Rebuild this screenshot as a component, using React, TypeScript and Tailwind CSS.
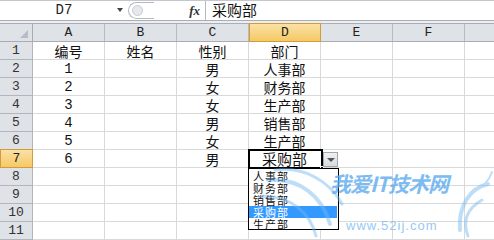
const cols = ['A', 'B', 'C', 'D', 'E', 'F'];

const rows: string[][] = [
    ['编号', '姓名', '性别', '部门'],
    ['1', '', '男', '人事部'],
    ['2', '', '女', '财务部'],
    ['3', '', '女', '生产部'],
    ['4', '', '男', '销售部'],
    ['5', '', '女', '生产部'],
    ['6', '', '男', ''],
    [], [], [], [],
];

const options = ['人事部', '财务部', '销售部', '采购部', '生产部'];

const cjk = { fontFamily: '"Noto Sans CJK SC", "Liberation Sans", sans-serif' };
const mono = { fontFamily: '"Liberation Mono", "DejaVu Sans Mono", monospace' };

const App = () => {
    return (
        <div className="relative w-[494px] h-[240px] overflow-hidden bg-white select-none">
            {/* Formula bar */}
            <div className="flex h-[20px] border-t border-[#c4c8ce] bg-white">
                <div className="relative w-[128px] flex items-center justify-center text-[14px] text-[#222]" style={mono}>
                    D7
                    <span className="absolute right-[5px] top-[7px] w-0 h-0 border-l-[3px] border-r-[3px] border-t-[4px] border-l-transparent border-r-transparent border-t-[#444]" />
                </div>
                <div className="flex items-center w-[28px]">
                    <div className="flex items-center h-[17px] w-[26px] rounded-l-full border border-r-0 border-[#b5b9bf] pl-[3px]">
                        <div className="w-[11px] h-[11px] rounded-full bg-[#e6e8eb] border border-[#c9ccd0]" />
                    </div>
                </div>
                <div className="flex-1 max-w-[49px] flex items-center justify-end pr-[5px]">
                    <span className="text-[13px] italic font-bold text-[#333]" style={{ fontFamily: '"Liberation Serif", serif' }}>fx</span>
                </div>
                <div className="flex-1 flex items-center border-l border-[#b5b9bf] pl-[6px] text-[15px] text-[#111]" style={cjk}>
                    采购部
                </div>
            </div>
            <div className="h-[4px] border-t border-b border-[#a9aeb5] bg-[#eceef1]" />

            {/* Column headers */}
            <div className="flex h-[18px] bg-[#dfe2e7] border-b border-[#a8adb4]">
                <div className="relative w-[33px] border-r border-[#a8adb4]">
                    <span className="absolute right-[4px] bottom-[3px] w-0 h-0" style={{ borderRight: '8px solid #b9bdc3', borderTop: '8px solid transparent' }} />
                </div>
                {cols.map((c) => (
                    <div
                        key={c}
                        className={
                            c === 'D'
                                ? 'w-[72px] flex items-center justify-center text-[13px] text-[#222] bg-gradient-to-b from-[#fbe1a4] to-[#f5c964] border border-[#d49b3a] -mt-px -mb-px'
                                : 'w-[72px] flex items-center justify-center text-[13px] text-[#222] border-r border-[#b8bcc2]'
                        }
                        style={mono}
                    >
                        {c}
                    </div>
                ))}
                <div className="flex-1" />
            </div>

            {/* Rows */}
            {rows.map((r, i) => (
                <div key={i} className="flex h-[18px]">
                    <div
                        className={
                            i === 6
                                ? 'w-[33px] flex items-center justify-center text-[13px] text-[#222] bg-gradient-to-b from-[#fbe1a4] to-[#f5c964] border border-[#d49b3a] -mt-px'
                                : 'w-[33px] flex items-center justify-center text-[13px] text-[#333] bg-[#dfe2e7] border-r border-b border-[#b1b6bd]'
                        }
                        style={mono}
                    >
                        {i + 1}
                    </div>
                    {cols.map((c, j) => {
                        const v = r[j] ?? '';
                        const isNum = /^[0-9]+$/.test(v);
                        return (
                            <div
                                key={c}
                                className="w-[72px] flex items-center justify-center border-r border-b border-[#d9d9d9] text-[14px] text-[#111] leading-none"
                                style={isNum ? mono : cjk}
                            >
                                {v}
                            </div>
                        );
                    })}
                    <div className="flex-1 border-b border-[#d9d9d9]" />
                </div>
            ))}

            {/* Active cell D7 */}
            <div className="absolute left-[248px] top-[149px] w-[75px] h-[20px] border-2 border-black bg-white flex items-center justify-center text-[15px] text-[#111]" style={cjk}>
                <span className="-ml-[2px]">采购部</span>
                <span className="absolute right-[-3px] bottom-[-3px] w-[4px] h-[4px] bg-black border border-white" />
            </div>

            {/* Dropdown button */}
            <div className="absolute left-[323px] top-[152px] w-[15px] h-[15px] border border-[#a3a7ad] bg-gradient-to-b from-[#eef0f2] to-[#d9dcdf] flex items-center justify-center">
                <span className="w-0 h-0 border-l-[4px] border-r-[4px] border-t-[4px] border-l-transparent border-r-transparent border-t-[#555]" />
            </div>

            {/* Dropdown list */}
            <div className="absolute left-[248px] top-[168px] w-[91px] h-[62px] border border-black bg-white pt-[1px]" style={cjk}>
                {options.map((o) => (
                    <div
                        key={o}
                        className={
                            o === '采购部'
                                ? 'h-[12px] w-[88px] bg-[#3399ff] text-white text-[11px] leading-[12px] pl-[4px] tracking-[1px]'
                                : 'h-[12px] text-[#111] text-[11px] leading-[12px] pl-[4px] tracking-[1px]'
                        }
                    >
                        {o}
                    </div>
                ))}
            </div>

            {/* Watermark */}
            <div className="absolute inset-0 pointer-events-none">
                <svg className="absolute left-0 top-0" width="494" height="240" viewBox="0 0 494 240">
                    <g fill="none" stroke="#6fb8f2" strokeLinecap="round" opacity="0.45">
                        <path d="M268 180 C 300 178, 322 196, 330 224" strokeWidth="4" />
                        <path d="M262 196 C 290 196, 310 212, 316 236" strokeWidth="3" />
                        <path d="M275 170 C 305 166, 330 182, 342 204" strokeWidth="3" />
                        <path d="M488 184 C 470 188, 458 206, 460 230" strokeWidth="4" />
                        <path d="M482 200 C 468 208, 462 220, 468 236" strokeWidth="3" />
                        <path d="M474 190 C 486 186, 490 178, 492 172" strokeWidth="2" />
                    </g>
                </svg>
                <div
                    className="absolute left-[330px] top-[170px] text-[21px] leading-[26px] font-bold italic text-[#5cacef] opacity-80 tracking-[-1px]"
                    style={cjk}
                >
                    我爱IT技术网
                </div>
                <div
                    className="absolute left-[346px] top-[216px] text-[13px] text-[#7cbcf2] opacity-80 tracking-[1px]"
                    style={{ fontFamily: '"Liberation Sans", sans-serif' }}
                >
                    www.52ij.com
                </div>
            </div>
        </div>
    );
};

export default App;
